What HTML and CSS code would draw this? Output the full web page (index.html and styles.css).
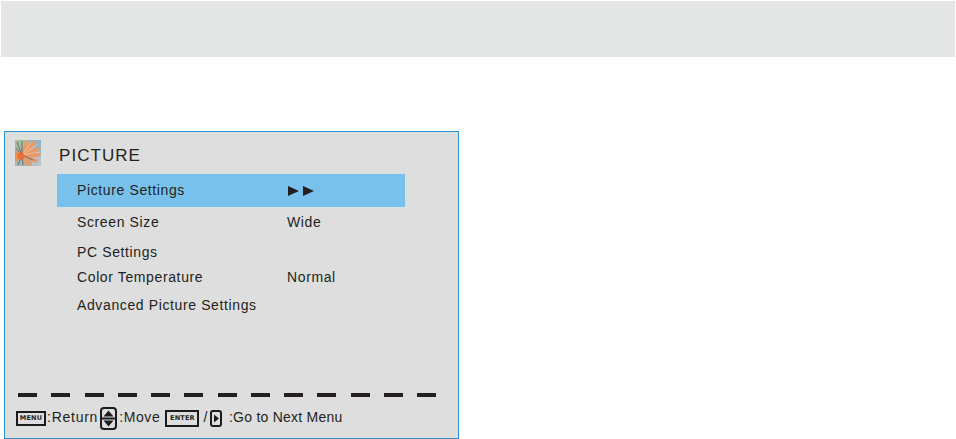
FILE: index.html
```html
<!DOCTYPE html>
<html lang="en">
<head>
  <meta charset="UTF-8" />
  <title>Picture Menu</title>
  <link rel="stylesheet" href="styles.css">
</head>
<body>
  <div class="banner"></div>

  <div class="panel">
    <div class="panel-head">
      <svg class="flower" viewBox="0 0 26 26" width="26" height="26">
        <rect width="26" height="26" fill="#a9b5ad"/>
        <rect x="14" y="0" width="12" height="12" fill="#8fb4c8"/>
        <rect x="0" y="0" width="12" height="8" fill="#a8bc9a"/>
        <rect x="17" y="17" width="9" height="9" fill="#b5c4cc"/>
        <g stroke="#e99a68" stroke-width="4" stroke-linecap="round">
          <path d="M7 15 L12 3"/>
          <path d="M7 15 L19 3"/>
          <path d="M7 15 L23 9"/>
          <path d="M7 15 L23 15"/>
          <path d="M7 15 L21 21"/>
          <path d="M7 15 L14 24"/>
        </g>
        <g stroke="#f1c8a0" stroke-width="0.8">
          <path d="M7 15 L16 2"/>
          <path d="M7 15 L23 4"/>
          <path d="M7 15 L25 12"/>
        </g>
        <g stroke="#5f6a72" stroke-width="0.9">
          <path d="M7 15 L2 2"/>
          <path d="M7 15 L7 1"/>
          <path d="M7 15 L1 8"/>
          <path d="M7 15 L8 25"/>
          <path d="M7 15 L3 25"/>
          <path d="M7 15 L18 20"/>
        </g>
        <path d="M0 10 L5 13 L5 19 L0 22Z" fill="#e9905a"/>
        <circle cx="6" cy="16" r="3.6" fill="#e8702f"/>
      </svg>
      <h1 class="panel-title">PICTURE</h1>
    </div>

    <ul class="menu">
      <li class="menu-item selected"><span class="label">Picture Settings</span><span class="arrows"><i></i><i></i></span></li>
      <li class="menu-item size"><span class="label">Screen Size</span><span>Wide</span></li>
      <li class="menu-item pc"><span class="label">PC Settings</span></li>
      <li class="menu-item color"><span class="label">Color Temperature</span><span>Normal</span></li>
      <li class="menu-item adv"><span class="label">Advanced Picture Settings</span></li>
    </ul>

    <div class="dashes">
      <span></span><span></span><span></span><span></span><span></span><span></span><span></span>
      <span></span><span></span><span></span><span></span><span></span><span></span>
    </div>

    <div class="help">
      <span class="key key-menu">MENU</span>
      <span class="help-text return">:Return</span>
      <svg class="updown" viewBox="0 0 17 23" width="17" height="23">
        <rect x="1" y="1" width="15" height="21" rx="3" fill="#dedede" stroke="#1c1c1c" stroke-width="2"/>
        <path d="M1 11.5H16" stroke="#1c1c1c" stroke-width="2"/>
        <path d="M8.5 3.5L13.5 9.5H3.5Z M8.5 19.5L3.5 13.5H13.5Z" fill="#1c1c1c"/>
      </svg>
      <span class="help-text">:Move</span>
      <span class="key key-enter">ENTER</span>
      <span class="help-text slash">/</span>
      <svg class="right-key" viewBox="0 0 12 17" width="12" height="17">
        <rect x="1" y="1" width="10" height="15" rx="2" fill="#dedede" stroke="#1c1c1c" stroke-width="2"/>
        <path d="M4 4.5L9 8.5L4 12.5Z" fill="#1c1c1c"/>
      </svg>
      <span class="help-text next">:Go to Next Menu</span>
    </div>
  </div>
</body>
</html>
```

FILE: styles.css
```css
body {
  margin: 0;
  background: #fff;
  color: #231f20;
  font-family: "Liberation Sans", Arial, sans-serif;
  font-size: 14px;
  letter-spacing: 0.62px;
}

.banner {
  height: 56px;
  margin: 1px 1px 0;
  background-color: #e4e6e5;
}

.panel {
  width: 453px;
  height: 306px;
  margin: 74px 0 0 4px;
  border: 1px solid #2a93d5;
  background-color: #dedede;
  display: flex;
  flex-direction: column;
}

.panel-head {
  height: 42px;
  display: flex;
  align-items: flex-start;
  padding-left: 10px;
}

.flower {
  margin-top: 8px;
  flex: none;
  filter: blur(0.4px);
}

.panel-title {
  margin: 14px 0 0 18px;
  font-size: 17px;
  line-height: 20px;
  font-weight: normal;
  letter-spacing: 1.05px;
}

.menu {
  list-style: none;
  margin: 0;
  padding: 0;
  width: 348px;
  margin-left: 52px;
}

.menu-item {
  box-sizing: border-box;
  display: flex;
  align-items: center;
  padding: 0 0 2px 20px;
}

.label {
  width: 210px;
  flex: none;
}

.selected {
  height: 33px;
  background-color: #77c1ec;
}

.size { height: 31px; }
.pc { height: 29px; }
.color { height: 22px; }
.adv { height: 33px; }

.arrows {
  display: flex;
  gap: 4px;
  margin: 2px 0 0 1px;
}

.arrows i {
  width: 0;
  height: 0;
  border-left: 11px solid #231f20;
  border-top: 5px solid transparent;
  border-bottom: 5px solid transparent;
}

.dashes {
  display: flex;
  justify-content: space-between;
  width: 418px;
  margin: 71px 0 0 13px;
}

.dashes span {
  width: 19px;
  height: 4px;
  background-color: #231f20;
}

.help {
  display: flex;
  align-items: center;
  height: 24px;
  margin: 9px 0 0 11px;
}

.help-text {
  margin-bottom: 2px;
}

.return {
  letter-spacing: 0.75px;
}

.key {
  box-sizing: border-box;
  border: 2px solid #1c1c1c;
  font-family: "DejaVu Sans", sans-serif;
  font-weight: bold;
  text-align: center;
}

.key-menu {
  width: 30px;
  height: 15px;
  margin-right: 1px;
  font-size: 6.5px;
  letter-spacing: 0.2px;
  line-height: 11px;
}

.key-enter {
  width: 34px;
  height: 17px;
  margin-left: 5px;
  font-size: 6.5px;
  letter-spacing: 0.2px;
  line-height: 13px;
}

.updown {
  margin: 0 2px 0 2px;
  flex: none;
}

.slash {
  margin: 0 2px 2px 4px;
}

.next {
  margin-left: 7px;
  letter-spacing: 0.25px;
}
```
